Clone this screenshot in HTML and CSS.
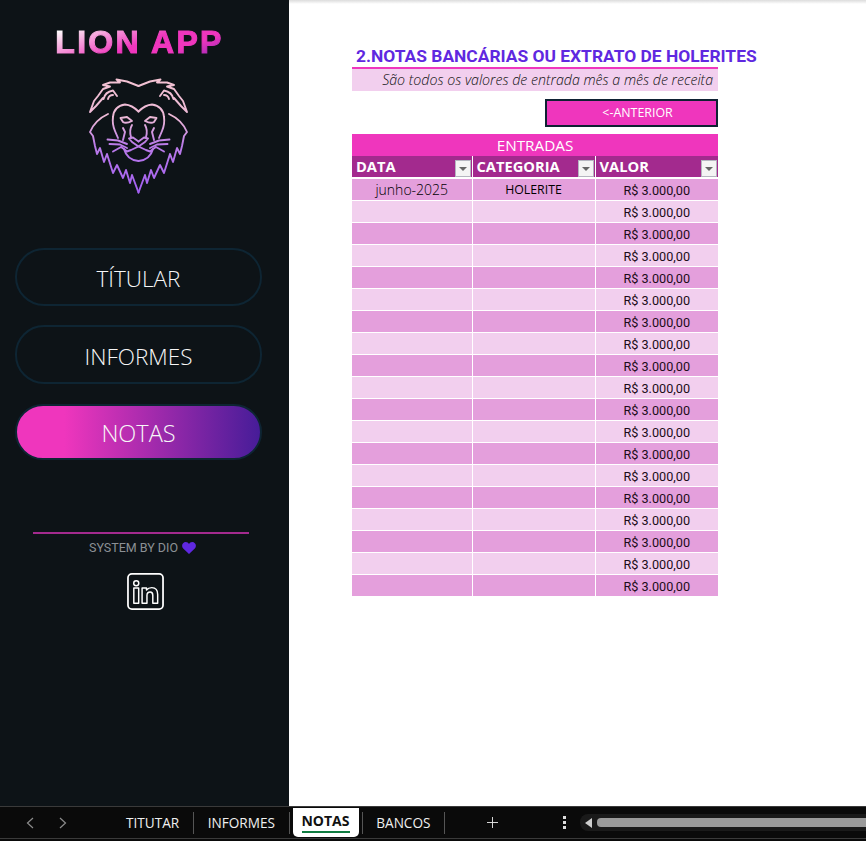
FILE: index.html
```html
<!DOCTYPE html>
<html lang="pt-BR">
<head>
    <meta charset="UTF-8">
    <title>Lion App</title>
    <link rel="stylesheet" href="styles.css">
</head>
<body>
    <div class="window">
        <aside class="sidebar">
            <div class="brand">LION APP</div>
            <svg class="lion" viewBox="0 0 117 130" fill="none">
                <defs>
                    <linearGradient id="mane" gradientUnits="userSpaceOnUse" x1="0" y1="8" x2="0" y2="122">
                        <stop offset="0" stop-color="#f3c3d3"/>
                        <stop offset="0.35" stop-color="#ecb8d6"/>
                        <stop offset="0.58" stop-color="#bb7ce8"/>
                        <stop offset="1" stop-color="#a25ff2"/>
                    </linearGradient>
                    <!-- left half, mirrored below -->
                    <g id="half">
                        <path d="M58.500 16 L47 11.500 L36.500 9.500 L40 12.500 L30 12.500 L23 15 L30 16.500 L23 19 L18 26 L14 31 L10 42 L16 36 L23 28"/>
                        <path d="M23.500 29 Q25 22 33 20.500 L37 26 M28 29 Q29 25 33 25"/>
                        <path d="M28 44 Q15 50 10 62 L13 66 L15 76 L17 84 L20 78 L24 92 L27 84 L33 103 L37 95 L43 108 L46 100 L50 113 L52 105 L58.500 122.500"/>
                        <path d="M58.500 41.500 Q52 35 45 34.500 Q34 36 33 47 Q32 54 35 61 L38 68"/>
                        <path d="M40.500 48 L47 47 L52 51 Q46 54 43 52 Z"/>
                        <path d="M43 58 L45 62 L43 70 M52 55 Q49 60 51 67"/>
                        <path d="M58.500 71.500 L53 67.500 L49 68.500 L52 72 L58.500 76.500 L51 80 L47 81.500 L44 79 Q47 90 58.500 91"/>
                        <path d="M27.500 69.500 L38 70.500 L47 74 M29.500 74 L40 74.500 L47 78 M33 81.500 L41 77 L44 79"/>
                    </g>
                </defs>
                <g stroke="url(#mane)" stroke-width="1.900" stroke-linejoin="round" stroke-linecap="round">
                    <use href="#half"/>
                    <use href="#half" transform="translate(117 0) scale(-1 1)"/>
                </g>
            </svg>
            <nav class="menu">
                <a class="pill">TÍTULAR</a>
                <a class="pill">INFORMES</a>
                <a class="pill pill-active">NOTAS</a>
            </nav>
            <div class="credit">
                <span>SYSTEM BY DIO</span>
                <svg class="heart" viewBox="0 0 14 12"><path d="M7 12 L1.200 6.500 C-1.200 3.800 .6 0 3.800 0 C5.200 0 6.400 .8 7 2 C7.600 .8 8.800 0 10.200 0 C13.400 0 15.200 3.800 12.800 6.500 Z"/></svg>
            </div>
            <svg class="linkedin" viewBox="0 0 38 38" fill="none" stroke="#fff" stroke-width="1.500" stroke-linejoin="round">
                <rect x="1" y="1" width="36" height="36" rx="4" stroke-width="1.800"/>
                <circle cx="9.500" cy="10.500" r="2.600"/>
                <path d="M7 15.500 H12 V31 H7 Z"/>
                <path d="M15.500 15.500 H20 V17.500 C21.500 15.500 23.500 15 25.500 15 C29.500 15 31.500 17.500 31.500 22 V31 H26.500 V23 C26.500 20.500 25.500 19.500 23.800 19.500 C21.800 19.500 20.500 20.800 20.500 23 V31 H15.500 Z"/>
            </svg>
        </aside>

        <main class="sheet">
            <h1 class="sheet-title">2.NOTAS BANCÁRIAS OU EXTRATO DE HOLERITES</h1>
            <p class="sheet-sub">São todos os valores de entrada mês a mês de receita</p>
            <div class="sheet-actions"><button class="back">&lt;-ANTERIOR</button></div>
            <table class="entries">
                <colgroup>
                    <col class="col-date">
                    <col class="col-cat">
                    <col class="col-val">
                </colgroup>
                <thead>
                    <tr><th class="entries-caption" colspan="3">ENTRADAS</th></tr>
                    <tr class="entries-head">
                        <th><div class="head-cell">DATA<span class="filter"></span></div></th>
                        <th><div class="head-cell">CATEGORIA<span class="filter"></span></div></th>
                        <th><div class="head-cell">VALOR<span class="filter"></span></div></th>
                    </tr>
                </thead>
                <tbody>
                    <tr><td class="date">junho-2025</td><td class="cat">HOLERITE</td><td class="val">R$ 3.000,00</td></tr>
                    <tr><td></td><td></td><td class="val">R$ 3.000,00</td></tr>
                    <tr><td></td><td></td><td class="val">R$ 3.000,00</td></tr>
                    <tr><td></td><td></td><td class="val">R$ 3.000,00</td></tr>
                    <tr><td></td><td></td><td class="val">R$ 3.000,00</td></tr>
                    <tr><td></td><td></td><td class="val">R$ 3.000,00</td></tr>
                    <tr><td></td><td></td><td class="val">R$ 3.000,00</td></tr>
                    <tr><td></td><td></td><td class="val">R$ 3.000,00</td></tr>
                    <tr><td></td><td></td><td class="val">R$ 3.000,00</td></tr>
                    <tr><td></td><td></td><td class="val">R$ 3.000,00</td></tr>
                    <tr><td></td><td></td><td class="val">R$ 3.000,00</td></tr>
                    <tr><td></td><td></td><td class="val">R$ 3.000,00</td></tr>
                    <tr><td></td><td></td><td class="val">R$ 3.000,00</td></tr>
                    <tr><td></td><td></td><td class="val">R$ 3.000,00</td></tr>
                    <tr><td></td><td></td><td class="val">R$ 3.000,00</td></tr>
                    <tr><td></td><td></td><td class="val">R$ 3.000,00</td></tr>
                    <tr><td></td><td></td><td class="val">R$ 3.000,00</td></tr>
                    <tr><td></td><td></td><td class="val">R$ 3.000,00</td></tr>
                    <tr><td></td><td></td><td class="val">R$ 3.000,00</td></tr>
                </tbody>
            </table>
        </main>
    </div>

    <footer class="tabbar">
        <div class="tab-nav">
            <svg viewBox="0 0 8 12" fill="none" stroke="#8c8c8c" stroke-width="1.200"><path d="M7 1 L1.500 6 L7 11"/></svg>
            <svg viewBox="0 0 8 12" fill="none" stroke="#8c8c8c" stroke-width="1.200"><path d="M1 1 L6.500 6 L1 11"/></svg>
        </div>
        <div class="tabs">
            <span class="tab tab-titular">TITUTAR</span>
            <span class="tab tab-informes">INFORMES</span>
            <span class="tab tab-active">NOTAS</span>
            <span class="tab tab-bancos">BANCOS</span>
        </div>
        <svg class="tab-add" viewBox="0 0 12 12" stroke="#e8e8e8" stroke-width="1"><path d="M6 0 V12 M0 6 H12"/></svg>
        <div class="tab-more"><i></i><i></i><i></i></div>
        <div class="scroll">
            <span class="scroll-left"></span>
            <span class="scroll-thumb"></span>
        </div>
    </footer>
</body>
</html>
```

FILE: styles.css
```css
html, body {
    margin: 0;
    height: 100%;
}
body {
    background-color: #0a0a0a;
    font-family: "Open Sans", sans-serif;
    overflow: hidden;
}
.window {
    display: flex;
    height: 806px;
}

/* sidebar */
.sidebar {
    width: 289px;
    flex-shrink: 0;
    box-sizing: border-box;
    padding-right: 12px;
    background-color: #0d1317;
    display: flex;
    flex-direction: column;
    align-items: center;
}
.brand {
    margin-top: 24px;
    margin-left: 2px;
    font-family: "Liberation Sans", sans-serif;
    font-weight: bold;
    font-size: 32px;
    line-height: 36px;
    letter-spacing: 2.300px;
    -webkit-text-stroke: 1.100px transparent;
    background: linear-gradient(160deg, #fff 8%, #f9c3e6 20%, #ef36bd 52%, #ef36bd 72%, #a32ab8 92%);
    -webkit-background-clip: text;
    background-clip: text;
    color: transparent;
}
.lion {
    display: block;
    width: 117px;
    height: 130px;
    margin-top: 10px;
    margin-left: -1px;
}
.menu {
    margin-top: 48px;
    width: 247px;
    display: flex;
    flex-direction: column;
}
.pill {
    box-sizing: border-box;
    height: 58px;
    padding-top: 2px;
    border: 2px solid #0e2533;
    border-radius: 29px;
    color: #f7f7f7;
    font-weight: 300;
    font-size: 22.500px;
    display: flex;
    align-items: center;
    justify-content: center;
    margin-bottom: 19px;
}
.pill:nth-child(2) {
    height: 59px;
    padding-top: 4px;
}
.pill-active {
    height: 56px;
    margin-top: 1px;
    font-size: 23.500px;
    background: linear-gradient(90deg, #ef36bd 0%, #ef36bd 20%, #451c98 100%);
    background-origin: border-box;
}
.credit {
    margin-top: 53px;
    margin-left: 5px;
    width: 216px;
    box-sizing: border-box;
    border-top: 2px solid #a32a8e;
    padding: 6px 0 0 3px;
    display: flex;
    justify-content: center;
    align-items: center;
    gap: 4px;
    color: #8b9094;
    font-family: Roboto, sans-serif;
    font-size: 12.500px;
    line-height: 16px;
}
.heart {
    width: 14px;
    height: 12px;
    fill: #5f28e0;
}
.linkedin {
    width: 37px;
    height: 37px;
    margin-top: 17px;
    margin-left: 13px;
}

/* sheet */
.sheet {
    flex: 1;
    background: linear-gradient(#dcdcdc, #fff 4px);
    padding: 46px 0 0 63px;
}
.sheet-title {
    width: 366px;
    margin: 0;
    box-sizing: border-box;
    padding-left: 4px;
    font-family: Roboto, sans-serif;
    font-weight: bold;
    font-size: 17.400px;
    line-height: 21px;
    color: #5f28e0;
    white-space: nowrap;
    border-bottom: 2px solid #ef36bd;
}
.sheet-sub {
    width: 366px;
    height: 22px;
    margin: 0;
    box-sizing: border-box;
    padding-right: 5px;
    background-color: #f2cfee;
    font-style: italic;
    font-weight: 300;
    font-size: 14.200px;
    line-height: 22px;
    color: #111;
    text-align: right;
    white-space: nowrap;
}
.sheet-actions {
    width: 366px;
    display: flex;
    justify-content: flex-end;
    margin-top: 8px;
}
.back {
    width: 173px;
    height: 28px;
    padding: 0 0 2px 12px;
    box-sizing: border-box;
    background-color: #ef36bd;
    border: 2px solid #0f2233;
    color: #fff;
    font-family: "Open Sans", sans-serif;
    font-size: 12.400px;
}
.entries {
    width: 366px;
    margin-top: 7px;
    border-collapse: collapse;
    table-layout: fixed;
}
.col-date {
    width: 120px;
}
.col-cat {
    width: 123px;
}
.entries th,
.entries td {
    padding: 0;
}
.entries-caption {
    height: 22px;
    background-color: #ef36bd;
    color: #fff;
    font-weight: 400;
    font-size: 15.300px;
    line-height: 22px;
}
.entries-head th {
    height: 21px;
    background-color: #a32a8e;
    border-right: 1px solid #fff;
    border-bottom: 2px solid #fff;
}
.entries-head th:last-child {
    border-right: 0;
}
.head-cell {
    display: flex;
    justify-content: space-between;
    align-items: center;
    padding: 0 1px 0 4px;
    color: #fff;
    font-weight: bold;
    font-size: 14.700px;
    line-height: 21px;
}
.filter {
    width: 16px;
    height: 17px;
    margin-top: 3px;
    box-sizing: border-box;
    background-color: #f4f4f4;
    border: 1px solid #b5b5c0;
    position: relative;
}
.filter::after {
    content: "";
    position: absolute;
    left: 3px;
    top: 6px;
    border: 4px solid transparent;
    border-top-color: #666;
    border-bottom-width: 0;
}
.entries tbody tr {
    height: 22px;
}
.entries tbody td {
    box-sizing: border-box;
    height: 22px;
    padding-top: 1px;
    border-right: 1px solid #fff;
    border-bottom: 1px solid #fff;
    text-align: center;
    color: #1c0c18;
    background-color: #e49fdc;
}
.entries tbody tr:nth-child(even) td {
    background-color: #f2cfee;
}
.entries tbody td:last-child {
    border-right: 0;
}
.entries tbody tr:last-child td {
    border-bottom: 0;
}
.entries .date {
    font-weight: 300;
    font-size: 14px;
    color: #000;
}
.entries .cat {
    font-size: 12.300px;
    color: #000;
}
.entries .val {
    padding-top: 2px;
    font-family: Roboto, sans-serif;
    font-size: 12.700px;
}

/* tab strip */
.tabbar {
    height: 31px;
    border-top: 1px solid #3a3a3a;
    border-bottom: 1px solid #3a3a3a;
    background-color: #0a0a0a;
    display: flex;
    align-items: center;
    color: #f0f0f0;
    font-size: 13.600px;
}
.tab-nav {
    width: 126px;
    flex-shrink: 0;
    display: flex;
    gap: 25px;
    padding-left: 26px;
    box-sizing: border-box;
}
.tab-nav svg {
    width: 8px;
    height: 12px;
}
.tabs {
    display: flex;
    align-items: center;
    height: 100%;
    width: 319px;
    flex-shrink: 0;
}
.tab {
    height: 22px;
    line-height: 22px;
    box-sizing: border-box;
    white-space: nowrap;
}
.tab-titular {
    width: 68px;
    border-right: 1px solid #555;
}
.tab-informes {
    width: 97px;
    padding-left: 14px;
    border-right: 1px solid #555;
}
.tab-active {
    width: 66px;
    height: 29px;
    margin: 0 3px;
    padding-left: 8px;
    background-color: #fff;
    border-radius: 0 0 5px 5px;
    color: #111;
    font-weight: bold;
    font-size: 14px;
    line-height: 25px;
    position: relative;
}
.tab-active::after {
    content: "";
    position: absolute;
    left: 9px;
    right: 9px;
    bottom: 4px;
    height: 2px;
    background-color: #107c41;
}
.tab-bancos {
    width: 83px;
    padding-left: 13px;
    border-left: 1px solid #555;
    border-right: 1px solid #555;
}
.tab-add {
    width: 11px;
    height: 11px;
    margin-left: 42px;
}
.tab-more {
    margin-left: 65px;
    display: flex;
    flex-direction: column;
    gap: 2px;
}
.tab-more i {
    width: 3px;
    height: 3px;
    background-color: #ddd;
}
.scroll {
    margin-left: 14px;
    flex: 1;
    height: 17px;
    background-color: #1a1a1a;
    border-radius: 8px 0 0 8px;
    display: flex;
    align-items: center;
    padding-left: 5px;
}
.scroll-left {
    border: 5px solid transparent;
    border-right: 7px solid #cfcfcf;
    border-left-width: 0;
}
.scroll-thumb {
    flex: 1;
    height: 9px;
    margin-left: 5px;
    background-color: #9b9b9b;
    border-radius: 4px 0 0 4px;
}
```
